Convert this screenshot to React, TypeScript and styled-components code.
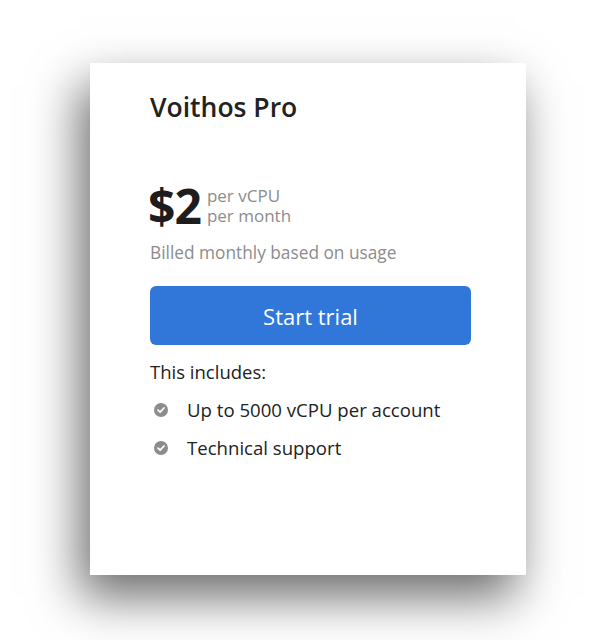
import { createGlobalStyle, styled } from 'styled-components';

const GlobalStyle = createGlobalStyle`
  html, body {
    margin: 0;
    padding: 0;
    background: #ffffff;
    font-family: 'Open Sans', 'Liberation Sans', sans-serif;
  }
`;

const Page = styled.div`
  display: flex;
  align-items: center;
  justify-content: center;
  width: 616px;
  height: 640px;
`;

const Card = styled.div`
  box-sizing: border-box;
  width: 436px;
  height: 512px;
  margin-top: -2px;
  padding: 26px 55px 0 60px;
  background: #ffffff;
  box-shadow: -10px 22px 46px rgba(0, 0, 0, 0.58);
  color: #222222;
`;

const Title = styled.h1`
  margin: 0;
  font-size: 26.5px;
  font-weight: 600;
  line-height: 36px;
  color: #222222;
`;

const PriceRow = styled.div`
  display: flex;
  align-items: center;
  gap: 6px;
  margin-top: 55px;
`;

const Amount = styled.span`
  font-size: 48px;
  font-weight: 700;
  line-height: 52px;
  letter-spacing: -1px;
  margin-left: -2px;
  color: #1d1d1d;
`;

const Unit = styled.div`
  display: flex;
  flex-direction: column;
  font-size: 17px;
  line-height: 20px;
  color: #8c8c8c;
`;

const Note = styled.p`
  margin: 9px 0 0;
  font-size: 17.3px;
  line-height: 24px;
  color: #8c8c8c;
`;

const TrialButton = styled.button`
  display: block;
  width: 321px;
  height: 59px;
  margin-top: 21px;
  border: none;
  border-radius: 6px;
  background: #3077d9;
  color: #ffffff;
  font-family: inherit;
  font-size: 22px;
  cursor: pointer;
`;

const Includes = styled.p`
  margin: 15px 0 0;
  font-size: 18.5px;
  line-height: 24px;
  color: #222222;
`;

const FeatureList = styled.ul`
  list-style: none;
  margin: 14px 0 0;
  padding: 0;
  display: flex;
  flex-direction: column;
  gap: 14px;
`;

const Feature = styled.li`
  display: flex;
  align-items: center;
  gap: 19px;
  padding-left: 4px;
  font-size: 18.6px;
  line-height: 24px;
  color: #222222;
`;

const CheckIcon = () => (
  <svg width="14" height="14" viewBox="0 0 14 14" aria-hidden="true">
    <circle cx="7" cy="7" r="7" fill="#8c8c8c" />
    <path d="M4 7.2 L6.1 9.2 L10 5" fill="none" stroke="#ffffff" strokeWidth="1.8" strokeLinecap="round" strokeLinejoin="round" />
  </svg>
);

const features = ['Up to 5000 vCPU per account', 'Technical support'];

const App = () => {
  return (
    <Page>
      <GlobalStyle />
      <Card>
        <Title>Voithos Pro</Title>
        <PriceRow>
          <Amount>$2</Amount>
          <Unit>
            <span>per vCPU</span>
            <span>per month</span>
          </Unit>
        </PriceRow>
        <Note>Billed monthly based on usage</Note>
        <TrialButton>Start trial</TrialButton>
        <Includes>This includes:</Includes>
        <FeatureList>
          {features.map((f) => (
            <Feature key={f}>
              <CheckIcon />
              {f}
            </Feature>
          ))}
        </FeatureList>
      </Card>
    </Page>
  );
};

export default App;
